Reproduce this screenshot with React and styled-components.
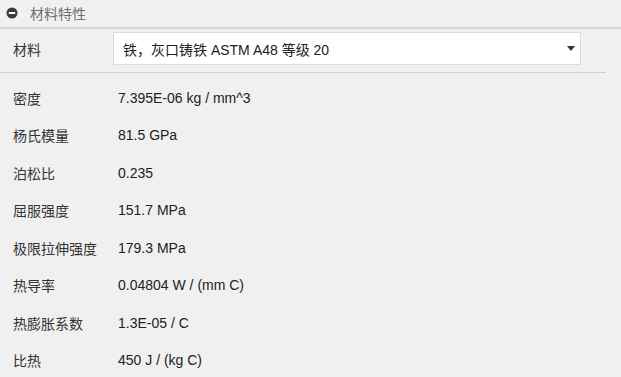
import styled, { createGlobalStyle } from "styled-components";

const GlobalStyle = createGlobalStyle`
  html, body {
    margin: 0;
    padding: 0;
    background: #f0f0f0;
  }
  body {
    font-family: "Liberation Sans", "Noto Sans CJK SC", sans-serif;
    color: #222;
  }
`;

const Panel = styled.div`
  width: 621px;
  height: 377px;
  overflow: hidden;
  background: #f0f0f0;
`;

const Header = styled.div`
  display: flex;
  align-items: center;
  gap: 12px;
  height: 29px;
  padding-left: 6px;
  padding-bottom: 2px;
  border-bottom: 2px solid #d4d4d4;
  box-sizing: border-box;
`;

const Title = styled.span`
  font-size: 14px;
  color: #6e6e6e;
`;

const SelectRow = styled.div`
  display: flex;
  align-items: center;
  height: 44px;
  margin-right: 15px;
  border-bottom: 1px solid #cfcfcf;
  box-sizing: border-box;
  padding-top: 2px;
`;

const Label = styled.div`
  width: 100px;
  padding-left: 13px;
  font-size: 14px;
  color: #333;
  flex-shrink: 0;
  margin-top: ${(p) => (p.$raised ? "-5px" : "0")};
`;

const SelectBox = styled.div`
  width: 468px;
  height: 33px;
  box-sizing: border-box;
  background: #fff;
  border: 1px solid #dcdcdc;
  display: flex;
  align-items: center;
  justify-content: space-between;
  padding: 0 5px 0 9px;
  font-size: 14px;
  color: #222;
  margin-top: -6px;
`;

const Arrow = styled.span`
  width: 0;
  height: 0;
  border-left: 4px solid transparent;
  border-right: 4px solid transparent;
  border-top: 5px solid #333;
`;

const List = styled.div`
  display: flex;
  flex-direction: column;
  padding-top: 6px;
`;

const Row = styled.div`
  display: flex;
  align-items: center;
  height: 37.5px;
`;

const Value = styled.div`
  padding-left: 5px;
  font-size: 14px;
  color: #222;
`;

const minus = (
  <svg width="12" height="12" viewBox="0 0 12 12">
    <circle cx="6" cy="6" r="5.5" fill="#3a3a3a" />
    <rect x="2.8" y="5" width="6.4" height="2" fill="#fff" />
  </svg>
);

const props = [
  ["密度", "7.395E-06 kg / mm^3"],
  ["杨氏模量", "81.5 GPa"],
  ["泊松比", "0.235"],
  ["屈服强度", "151.7 MPa"],
  ["极限拉伸强度", "179.3 MPa"],
  ["热导率", "0.04804 W / (mm C)"],
  ["热膨胀系数", "1.3E-05 / C"],
  ["比热", "450 J / (kg C)"],
];

const App = () => {
  return (
    <Panel>
      <GlobalStyle />
      <Header>
        {minus}
        <Title>材料特性</Title>
      </Header>
      <SelectRow>
        <Label $raised>材料</Label>
        <SelectBox>
          <span>铁，灰口铸铁 ASTM A48 等级 20</span>
          <Arrow />
        </SelectBox>
      </SelectRow>
      <List>
        {props.map(([k, v]) => (
          <Row key={k}>
            <Label>{k}</Label>
            <Value>{v}</Value>
          </Row>
        ))}
      </List>
    </Panel>
  );
};

export default App;
